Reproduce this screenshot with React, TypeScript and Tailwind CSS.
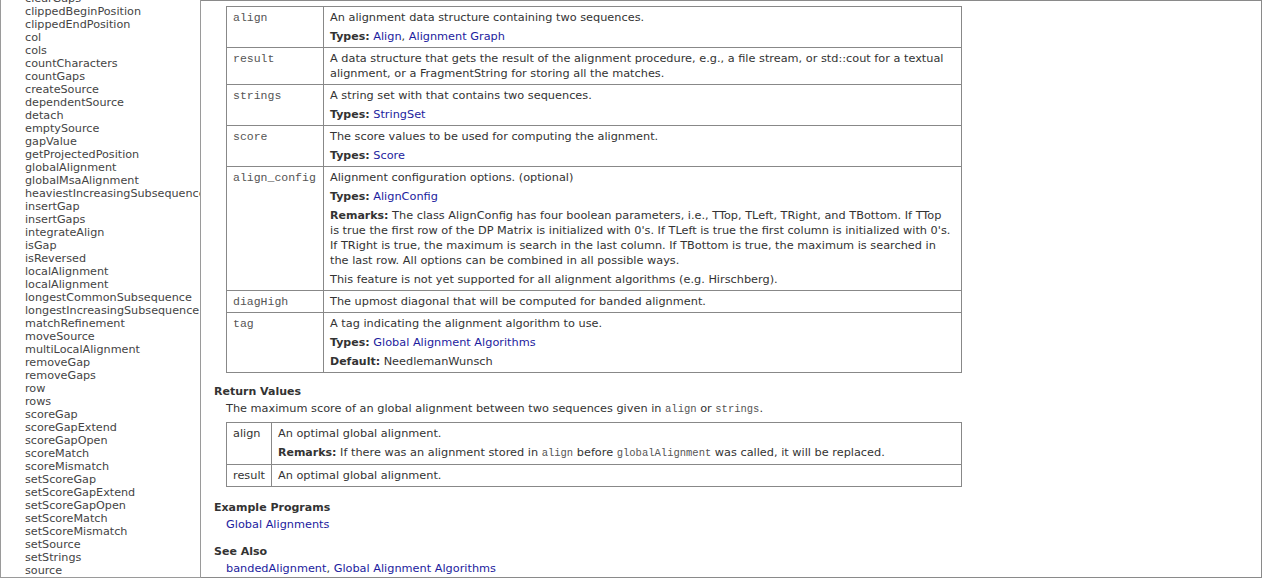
import React from "react";

const items = [
  "clearGaps",
  "clippedBeginPosition",
  "clippedEndPosition",
  "col",
  "cols",
  "countCharacters",
  "countGaps",
  "createSource",
  "dependentSource",
  "detach",
  "emptySource",
  "gapValue",
  "getProjectedPosition",
  "globalAlignment",
  "globalMsaAlignment",
  "heaviestIncreasingSubsequence",
  "insertGap",
  "insertGaps",
  "integrateAlign",
  "isGap",
  "isReversed",
  "localAlignment",
  "localAlignment",
  "longestCommonSubsequence",
  "longestIncreasingSubsequence",
  "matchRefinement",
  "moveSource",
  "multiLocalAlignment",
  "removeGap",
  "removeGaps",
  "row",
  "rows",
  "scoreGap",
  "scoreGapExtend",
  "scoreGapOpen",
  "scoreMatch",
  "scoreMismatch",
  "setScoreGap",
  "setScoreGapExtend",
  "setScoreGapOpen",
  "setScoreMatch",
  "setScoreMismatch",
  "setSource",
  "setStrings",
  "source",
];

function L({ children }: { children: React.ReactNode }) {
  return <a className="text-[#1c1c9e] no-underline">{children}</a>;
}

function B({ children }: { children: React.ReactNode }) {
  return <b className="text-[11px] font-bold text-[#333]">{children}</b>;
}

function Code({ children }: { children: React.ReactNode }) {
  return (
    <code className="font-['Liberation_Mono',monospace] text-[10.5px] text-[#555]">
      {children}
    </code>
  );
}

function ParamRow({ name, children }: { name: string; children: React.ReactNode }) {
  return (
    <tr>
      <td className="w-[97px] border border-[#888] px-[6px] pt-[3px] pb-[3px] align-top font-['Liberation_Mono',monospace] text-[11.5px] leading-[15px] text-[#555]">
        {name}
      </td>
      <td className="border border-[#888] px-[6px] py-[3px] align-top">
        <div className="flex flex-col gap-[4px]">{children}</div>
      </td>
    </tr>
  );
}

export default function App() {
  return (
    <div className="flex h-[578px] w-[1262px] overflow-hidden bg-white font-['DejaVu_Sans',sans-serif] text-[11.3px] leading-[15px] text-[#333]">
      <div className="h-full w-[201px] shrink-0 overflow-hidden border-r border-b border-l border-[#9a9a9a]">
        <ul className="mt-[-8px] whitespace-nowrap pl-[24px] text-[11.2px] leading-[13px] text-[#444]">
          {items.map((it, i) => (
            <li key={i}>{it}</li>
          ))}
        </ul>
      </div>
      <div className="h-full flex-1 overflow-hidden border-t border-r border-b border-[#8a8a8a] pl-[13px] pt-[5px]">
        <table className="ml-[12px] w-[736px] table-fixed border-collapse">
          <tbody>
            <ParamRow name="align">
              <div>An alignment data structure containing two sequences.</div>
              <div>
                <B>Types:</B> <L>Align</L>, <L>Alignment Graph</L>
              </div>
            </ParamRow>
            <ParamRow name="result">
              <div className="whitespace-nowrap">
                A data structure that gets the result of the alignment procedure, e.g., a file stream, or
                std::cout for a textual
                <br />
                alignment, or a FragmentString for storing all the matches.
              </div>
            </ParamRow>
            <ParamRow name="strings">
              <div>A string set with that contains two sequences.</div>
              <div>
                <B>Types:</B> <L>StringSet</L>
              </div>
            </ParamRow>
            <ParamRow name="score">
              <div>The score values to be used for computing the alignment.</div>
              <div>
                <B>Types:</B> <L>Score</L>
              </div>
            </ParamRow>
            <ParamRow name="align_config">
              <div>Alignment configuration options. (optional)</div>
              <div>
                <B>Types:</B> <L>AlignConfig</L>
              </div>
              <div className="whitespace-nowrap">
                <B>Remarks:</B> The class AlignConfig has four boolean parameters, i.e., TTop, TLeft, TRight,
                and TBottom. If TTop
                <br />
                is true the first row of the DP Matrix is initialized with 0's. If TLeft is true the first
                column is initialized with 0's.
                <br />
                If TRight is true, the maximum is search in the last column. If TBottom is true, the maximum is
                searched in
                <br />
                the last row. All options can be combined in all possible ways.
              </div>
              <div>This feature is not yet supported for all alignment algorithms (e.g. Hirschberg).</div>
            </ParamRow>
            <ParamRow name="diagHigh">
              <div>The upmost diagonal that will be computed for banded alignment.</div>
            </ParamRow>
            <ParamRow name="tag">
              <div>A tag indicating the alignment algorithm to use.</div>
              <div>
                <B>Types:</B> <L>Global Alignment Algorithms</L>
              </div>
              <div>
                <B>Default:</B> NeedlemanWunsch
              </div>
            </ParamRow>
          </tbody>
        </table>

        <div className="mt-[11px] text-[11px] font-bold">Return Values</div>
        <div className="ml-[12px] mt-[2px]">
          The maximum score of an global alignment between two sequences given in <Code>align</Code> or{" "}
          <Code>strings</Code>.
        </div>
        <table className="ml-[12px] mt-[5px] w-[736px] border-collapse">
          <tbody>
            <tr>
              <td className="w-[1%] whitespace-nowrap border border-[#888] px-[6px] py-[3px] align-top">
                align
              </td>
              <td className="border border-[#888] px-[6px] py-[3px] align-top">
                <div className="flex flex-col gap-[4px]">
                  <div>An optimal global alignment.</div>
                  <div>
                    <B>Remarks:</B> If there was an alignment stored in <Code>align</Code> before{" "}
                    <Code>globalAlignment</Code> was called, it will be replaced.
                  </div>
                </div>
              </td>
            </tr>
            <tr>
              <td className="w-[1%] whitespace-nowrap border border-[#888] px-[6px] py-[3px] align-top">
                result
              </td>
              <td className="border border-[#888] px-[6px] py-[3px] align-top">An optimal global alignment.</td>
            </tr>
          </tbody>
        </table>

        <div className="mt-[13px] text-[11px] font-bold">Example Programs</div>
        <div className="ml-[12px] mt-[2px]">
          <L>Global Alignments</L>
        </div>

        <div className="mt-[12px] text-[11px] font-bold">See Also</div>
        <div className="ml-[12px] mt-[2px]">
          <L>bandedAlignment</L>, <L>Global Alignment Algorithms</L>
        </div>
      </div>
    </div>
  );
}
